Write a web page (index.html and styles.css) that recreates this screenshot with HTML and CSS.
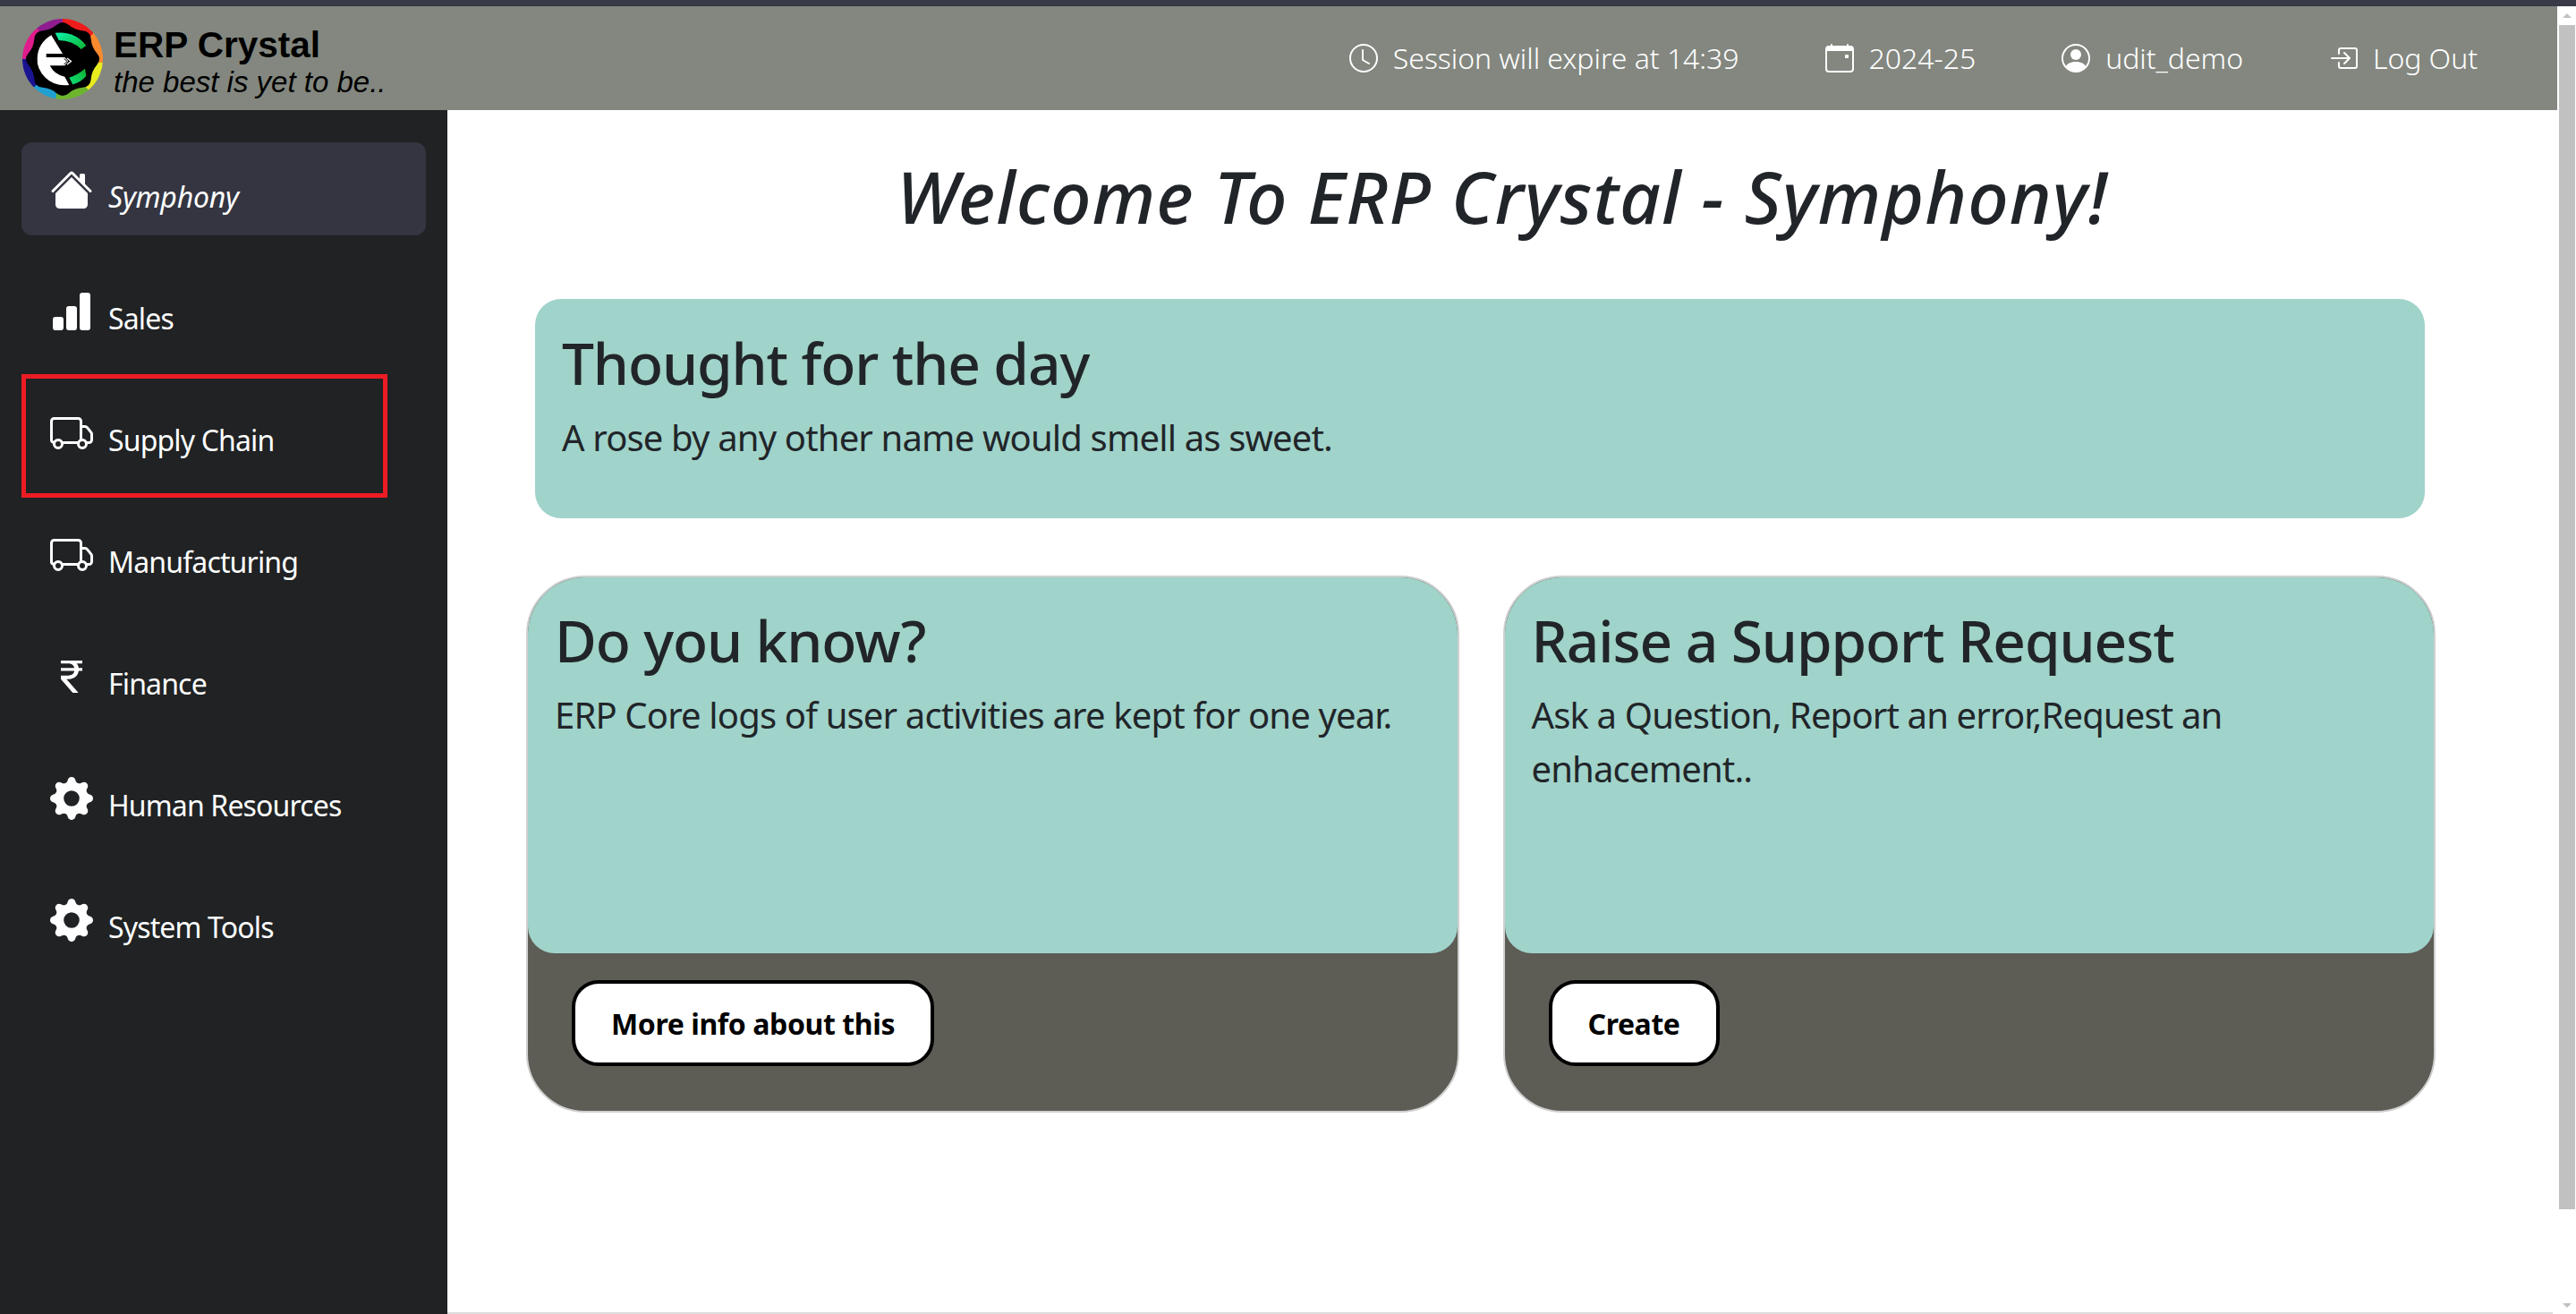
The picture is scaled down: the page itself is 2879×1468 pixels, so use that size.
FILE: index.html
```html
<!DOCTYPE html>
<html lang="en">
<head>
<meta charset="utf-8">
<title>ERP Crystal</title>
<link rel="stylesheet" href="styles.css">
</head>
<body>
<div class="strip"></div>
<div class="shell">
  <div class="page">
    <header class="topbar">
      <div class="brand">
        <div class="logo">
          <svg viewBox="0 0 90 90" width="90" height="90">
            <defs>
              <linearGradient id="g1" x1="0" y1="0" x2="1" y2="1"><stop offset="0" stop-color="#0cf2ae"/><stop offset="1" stop-color="#10b52f"/></linearGradient>
              <linearGradient id="g2" x1="0" y1="1" x2="1" y2="0"><stop offset="0" stop-color="#0ce07a"/><stop offset="1" stop-color="#10b030"/></linearGradient>
            </defs>
            <path fill="#000" d="M38.3 6.85Q45 1 51.7 6.85T67.25 13.3T76.7 22.75T83.15 38.3T83.15 51.7T76.7 67.25T67.25 76.7T51.7 83.15T38.3 83.15T22.75 76.7T13.3 67.25T6.85 51.7T6.85 38.3T13.3 22.75T22.75 13.3T38.3 6.85Z"/>
            <path fill="#fff" d="M32.3 18.3L45 39L26.7 39L26.7 43L47.3 43L51.3 47.3L47.3 52.3L30.7 52.3Q35.7 62.3 47.3 64.7L52.3 74Q35.7 75.7 25.7 65.7Q15.7 55.7 16.7 44Q17.3 27.3 32.3 18.3Z"/>
            <path fill="url(#g1)" d="M36.7 15.7Q59 13.3 71.3 30L65.7 34Q55.7 24 40.7 24Z"/>
            <path fill="url(#g2)" d="M52.3 65.7Q62.3 62.3 70 55.7L71.3 64Q65.7 70.7 56.3 73.3Z"/>
            <path fill="none" stroke="#000" stroke-width="1" d="M46.5 44.5L50 47.5L46.5 51"/>
            <path fill="none" stroke="#fff" stroke-width="1.3" d="M50 44L54.5 47.5L50 51"/>
          </svg>
        </div>
        <div class="brand-text">
          <div class="brand-name">ERP Crystal</div>
          <div class="brand-tag">the best is yet to be..</div>
        </div>
      </div>
      <nav class="topnav">
        <div class="topnav-item">
          <svg class="ticon" viewBox="0 0 16 16"><path d="M8 3.5a.5.5 0 0 0-1 0V9a.5.5 0 0 0 .252.434l3.5 2a.5.5 0 0 0 .496-.868L8 8.71V3.5z"/><path d="M8 16A8 8 0 1 0 8 0a8 8 0 0 0 0 16zm7-8A7 7 0 1 1 1 8a7 7 0 0 1 14 0z"/></svg>
          <span>Session will expire at 14:39</span>
        </div>
        <div class="topnav-item">
          <svg class="ticon" viewBox="0 0 16 16"><path d="M11 6.5a.5.5 0 0 1 .5-.5h1a.5.5 0 0 1 .5.5v1a.5.5 0 0 1-.5.5h-1a.5.5 0 0 1-.5-.5v-1z"/><path d="M3.5 0a.5.5 0 0 1 .5.5V1h8V.5a.5.5 0 0 1 1 0V1h1a2 2 0 0 1 2 2v11a2 2 0 0 1-2 2H2a2 2 0 0 1-2-2V3a2 2 0 0 1 2-2h1V.5a.5.5 0 0 1 .5-.5zM1 4v10a1 1 0 0 0 1 1h12a1 1 0 0 0 1-1V4H1z"/></svg>
          <span>2024-25</span>
        </div>
        <div class="topnav-item">
          <svg class="ticon" viewBox="0 0 16 16"><path d="M11 6a3 3 0 1 1-6 0 3 3 0 0 1 6 0z"/><path fill-rule="evenodd" d="M0 8a8 8 0 1 1 16 0A8 8 0 0 1 0 8zm8-7a7 7 0 0 0-5.468 11.37C3.242 11.226 4.805 10 8 10s4.757 1.225 5.468 2.37A7 7 0 0 0 8 1z"/></svg>
          <span>udit_demo</span>
        </div>
        <div class="topnav-item">
          <svg class="ticon" viewBox="0 0 16 16"><path fill-rule="evenodd" d="M6 3.5a.5.5 0 0 1 .5-.5h8a.5.5 0 0 1 .5.5v9a.5.5 0 0 1-.5.5h-8a.5.5 0 0 1-.5-.5v-2a.5.5 0 0 0-1 0v2A1.5 1.5 0 0 0 6.5 14h8a1.5 1.5 0 0 0 1.5-1.5v-9A1.5 1.5 0 0 0 14.5 2h-8A1.5 1.5 0 0 0 5 3.5v2a.5.5 0 0 0 1 0v-2z"/><path fill-rule="evenodd" d="M11.854 8.354a.5.5 0 0 0 0-.708l-3-3a.5.5 0 1 0-.708.708L10.293 7.5H1.5a.5.5 0 0 0 0 1h8.793l-2.147 2.146a.5.5 0 0 0 .708.708l3-3z"/></svg>
          <span>Log Out</span>
        </div>
      </nav>
    </header>
    <div class="body-row">
      <aside class="sidebar">
        <a class="side-item side-active">
          <svg class="sicon" viewBox="0 0 16 16"><path d="M8.707 1.5a1 1 0 0 0-1.414 0L.646 8.146a.5.5 0 0 0 .708.708L8 2.207l6.646 6.647a.5.5 0 0 0 .708-.708L13 5.793V2.5a.5.5 0 0 0-.5-.5h-1a.5.5 0 0 0-.5.5v1.293L8.707 1.5Z"/><path d="m8 3.293 6 6V13.5a1.5 1.5 0 0 1-1.5 1.5h-9A1.5 1.5 0 0 1 2 13.5V9.293l6-6Z"/></svg>
          <span class="side-label">Symphony</span>
        </a>
        <a class="side-item">
          <svg class="sicon" viewBox="0 0 16 16"><path d="M1 11a1 1 0 0 1 1-1h2a1 1 0 0 1 1 1v3a1 1 0 0 1-1 1H2a1 1 0 0 1-1-1v-3zm5-4a1 1 0 0 1 1-1h2a1 1 0 0 1 1 1v7a1 1 0 0 1-1 1H7a1 1 0 0 1-1-1V7zm5-5a1 1 0 0 1 1-1h2a1 1 0 0 1 1 1v12a1 1 0 0 1-1 1h-2a1 1 0 0 1-1-1V2z"/></svg>
          <span class="side-label">Sales</span>
        </a>
        <a class="side-item side-marked">
          <svg class="sicon" viewBox="0 0 16 16"><path d="M0 3.5A1.5 1.5 0 0 1 1.5 2h9A1.5 1.5 0 0 1 12 3.5V5h1.02a1.5 1.5 0 0 1 1.17.563l1.481 1.85a1.5 1.5 0 0 1 .329.938V10.5a1.5 1.5 0 0 1-1.5 1.5H14a2 2 0 1 1-4 0H5a2 2 0 1 1-3.998-.085A1.5 1.5 0 0 1 0 10.5v-7zm1.294 7.456A1.999 1.999 0 0 1 4.732 11h5.536a2.01 2.01 0 0 1 .732-.732V3.5a.5.5 0 0 0-.5-.5h-9a.5.5 0 0 0-.5.5v7a.5.5 0 0 0 .294.456zM12 10a2 2 0 0 1 1.732 1h.768a.5.5 0 0 0 .5-.5V8.35a.5.5 0 0 0-.11-.312l-1.48-1.85A.5.5 0 0 0 13.02 6H12v4zm-9 1a1 1 0 1 0 0 2 1 1 0 0 0 0-2zm9 0a1 1 0 1 0 0 2 1 1 0 0 0 0-2z"/></svg>
          <span class="side-label">Supply Chain</span>
        </a>
        <a class="side-item">
          <svg class="sicon" viewBox="0 0 16 16"><path d="M0 3.5A1.5 1.5 0 0 1 1.5 2h9A1.5 1.5 0 0 1 12 3.5V5h1.02a1.5 1.5 0 0 1 1.17.563l1.481 1.85a1.5 1.5 0 0 1 .329.938V10.5a1.5 1.5 0 0 1-1.5 1.5H14a2 2 0 1 1-4 0H5a2 2 0 1 1-3.998-.085A1.5 1.5 0 0 1 0 10.5v-7zm1.294 7.456A1.999 1.999 0 0 1 4.732 11h5.536a2.01 2.01 0 0 1 .732-.732V3.5a.5.5 0 0 0-.5-.5h-9a.5.5 0 0 0-.5.5v7a.5.5 0 0 0 .294.456zM12 10a2 2 0 0 1 1.732 1h.768a.5.5 0 0 0 .5-.5V8.35a.5.5 0 0 0-.11-.312l-1.48-1.85A.5.5 0 0 0 13.02 6H12v4zm-9 1a1 1 0 1 0 0 2 1 1 0 0 0 0-2zm9 0a1 1 0 1 0 0 2 1 1 0 0 0 0-2z"/></svg>
          <span class="side-label">Manufacturing</span>
        </a>
        <a class="side-item">
          <svg class="sicon" viewBox="0 0 16 16"><path d="M4 3.06h2.726c1.22 0 2.12.575 2.325 1.724H4v1.051h5.051C8.855 7.001 8 7.558 6.788 7.558H4v1.317L8.437 14h2.11L6.095 8.884h.855c2.316-.018 3.465-1.476 3.688-3.049H12V4.784h-1.345c-.08-.778-.357-1.335-.793-1.732H12V2H4v1.06Z"/></svg>
          <span class="side-label">Finance</span>
        </a>
        <a class="side-item">
          <svg class="sicon" viewBox="0 0 16 16"><path d="M9.405 1.05c-.413-1.4-2.397-1.4-2.81 0l-.1.34a1.464 1.464 0 0 1-2.105.872l-.31-.17c-1.283-.698-2.686.705-1.987 1.987l.169.311c.446.82.023 1.841-.872 2.105l-.34.1c-1.4.413-1.4 2.397 0 2.81l.34.1a1.464 1.464 0 0 1 .872 2.105l-.17.31c-.698 1.283.705 2.686 1.987 1.987l.311-.169a1.464 1.464 0 0 1 2.105.872l.1.34c.413 1.4 2.397 1.4 2.81 0l.1-.34a1.464 1.464 0 0 1 2.105-.872l.31.17c1.283.698 2.686-.705 1.987-1.987l-.169-.311a1.464 1.464 0 0 1 .872-2.105l.34-.1c1.4-.413 1.4-2.397 0-2.81l-.34-.1a1.464 1.464 0 0 1-.872-2.105l.17-.31c.698-1.283-.705-2.686-1.987-1.987l-.311.169a1.464 1.464 0 0 1-2.105-.872l-.1-.34zM8 10.93a2.929 2.929 0 1 1 0-5.86 2.929 2.929 0 0 1 0 5.858z"/></svg>
          <span class="side-label">Human Resources</span>
        </a>
        <a class="side-item">
          <svg class="sicon" viewBox="0 0 16 16"><path d="M9.405 1.05c-.413-1.4-2.397-1.4-2.81 0l-.1.34a1.464 1.464 0 0 1-2.105.872l-.31-.17c-1.283-.698-2.686.705-1.987 1.987l.169.311c.446.82.023 1.841-.872 2.105l-.34.1c-1.4.413-1.4 2.397 0 2.81l.34.1a1.464 1.464 0 0 1 .872 2.105l-.17.31c-.698 1.283.705 2.686 1.987 1.987l.311-.169a1.464 1.464 0 0 1 2.105.872l.1.34c.413 1.4 2.397 1.4 2.81 0l.1-.34a1.464 1.464 0 0 1 2.105-.872l.31.17c1.283.698 2.686-.705 1.987-1.987l-.169-.311a1.464 1.464 0 0 1 .872-2.105l.34-.1c1.4-.413 1.4-2.397 0-2.81l-.34-.1a1.464 1.464 0 0 1-.872-2.105l.17-.31c.698-1.283-.705-2.686-1.987-1.987l-.311.169a1.464 1.464 0 0 1-2.105-.872l-.1-.34zM8 10.93a2.929 2.929 0 1 1 0-5.86 2.929 2.929 0 0 1 0 5.858z"/></svg>
          <span class="side-label">System Tools</span>
        </a>
      </aside>
      <main class="main">
        <h1 class="welcome">Welcome To ERP Crystal - Symphony!</h1>
        <section class="thought">
          <h2 class="card-title">Thought for the day</h2>
          <p class="card-text">A rose by any other name would smell as sweet.</p>
        </section>
        <div class="cards">
          <article class="card">
            <div class="card-body">
              <h2 class="card-title">Do you know?</h2>
              <p class="card-text">ERP Core logs of user activities are kept for one year.</p>
            </div>
            <div class="card-foot"><button class="btn">More info about this</button></div>
          </article>
          <article class="card">
            <div class="card-body">
              <h2 class="card-title">Raise a Support Request</h2>
              <p class="card-text">Ask a Question, Report an error,Request an enhacement..</p>
            </div>
            <div class="card-foot"><button class="btn">Create</button></div>
          </article>
        </div>
      </main>
    </div>
  </div>
  <div class="scrollbar">
    <div class="arrow-up"></div>
    <div class="thumb"></div>
    <div class="arrow-down"></div>
  </div>
</div>
</body>
</html>
```
FILE: styles.css
```css
*, *::after { box-sizing: border-box; }
html, body { margin: 0; height: 100%; overflow: hidden; }
body {
  display: flex;
  flex-direction: column;
  background: #fff;
  color: #212529;
  font-family: "Noto Sans", "Open Sans", sans-serif;
}
.strip { height: 7px; flex: none; background: #383a47; }
.shell { flex: 1; display: flex; min-height: 0; }
.page { flex: 1; display: flex; flex-direction: column; min-width: 0; }

.topbar {
  height: 116px;
  flex: none;
  display: flex;
  align-items: center;
  justify-content: space-between;
  padding: 0 89px 0 25px;
  background: #83877f;
}
.brand { display: flex; align-items: center; gap: 12px; }
.logo {
  width: 90px;
  height: 90px;
  margin-top: 1px;
  border-radius: 50%;
  background: conic-gradient(#f01c1c 5deg 50deg, #f98a2d 50deg 95deg, #e8ec1f 95deg 140deg, #6db52d 140deg 190deg, #20a0d0 190deg 225deg, #1a1490 225deg 270deg, #e01c8c 270deg 320deg, #8f1d8f 320deg 365deg);
}
.logo svg { display: block; }
.brand-text { padding-top: 8px; font-family: "Liberation Sans", Arial, sans-serif; color: #000; }
.brand-name { font-size: 40.5px; font-weight: 700; line-height: 46px; }
.brand-tag { font-size: 33px; font-style: italic; line-height: 38px; }

.topnav { display: flex; gap: 96px; color: #fff; font-size: 32px; font-weight: 300; letter-spacing: -0.05px; }
.topnav-item { display: flex; align-items: center; gap: 17px; line-height: 44px; }
.ticon { width: 32px; height: 32px; fill: #fff; flex: none; }

.body-row { flex: 1; display: flex; min-height: 0; }
.sidebar {
  width: 500px;
  flex: none;
  display: flex;
  flex-direction: column;
  gap: 32px;
  padding: 36px 24px 0;
  background: #202224;
}
.side-item {
  position: relative;
  height: 104px;
  display: flex;
  align-items: flex-start;
  gap: 17px;
  padding: 29px 32px 0;
  color: #fff;
  font-size: 32px;
  letter-spacing: -0.85px;
  border-radius: 12px;
}
.side-active { background: #343541; font-style: italic; letter-spacing: -0.25px; }
.side-marked::after {
  content: "";
  position: absolute;
  left: 0;
  top: -13px;
  width: 409px;
  height: 138px;
  border: 5px solid #ed1c24;
}
.sicon { width: 48px; height: 48px; fill: #fff; flex: none; }
.side-label { margin-top: 8px; line-height: 48px; }

.main {
  flex: 1;
  min-width: 0;
  margin-right: 5px;
  padding: 0 131px 0 88px;
  border-bottom: 2px solid #dcdcdc;
}
.welcome {
  margin: 0 -131px 0 -88px;
  padding: 36px 0 0 5px;
  height: 211px;
  text-align: center;
  font-size: 80px;
  font-weight: 500;
  font-style: italic;
  letter-spacing: 1.1px;
  line-height: 120px;
}
.thought {
  height: 245px;
  margin: 0 12px 0 10px;
  padding: 34px 30px 0;
  background: #a0d3ca;
  border-radius: 29px;
}
.card-title { margin: 0 0 14px; font-size: 64px; font-weight: 500; letter-spacing: -1.1px; line-height: 76.8px; }
.card-text { margin: 0; font-size: 40px; letter-spacing: -0.84px; line-height: 60px; }

.cards { display: flex; gap: 49px; margin-top: 64px; }
.card {
  flex: 1;
  height: 600px;
  display: flex;
  flex-direction: column;
  background: #5d5c55;
  border: 2px solid #cfcfcf;
  border-radius: 66px;
  overflow: hidden;
}
.card-body {
  flex: 1;
  padding: 33px 30px 0;
  background: #a0d3ca;
  border-radius: 0 0 30px 30px;
}
.card-foot { height: 176px; flex: none; padding: 30px 49px 0; }
.btn {
  height: 96px;
  padding: 0 40px;
  background: #fff;
  border: 4px solid #000;
  border-radius: 30px;
  color: #000;
  font: 700 32px "Noto Sans", "Open Sans", sans-serif;
  letter-spacing: -0.4px;
}

.scrollbar {
  width: 21px;
  flex: none;
  display: flex;
  flex-direction: column;
  align-items: center;
  padding: 8px 1px 7px 2px;
  background: #fff;
}
.thumb { width: 18px; height: 1323px; margin-top: 8px; background: #c1c1c1; flex: none; }
.arrow-up, .arrow-down { width: 0; height: 0; flex: none; border-left: 5px solid transparent; border-right: 5px solid transparent; }
.arrow-up { border-bottom: 5px solid #c1c1c1; }
.arrow-down { margin-top: auto; border-top: 5px solid #c1c1c1; }
```
